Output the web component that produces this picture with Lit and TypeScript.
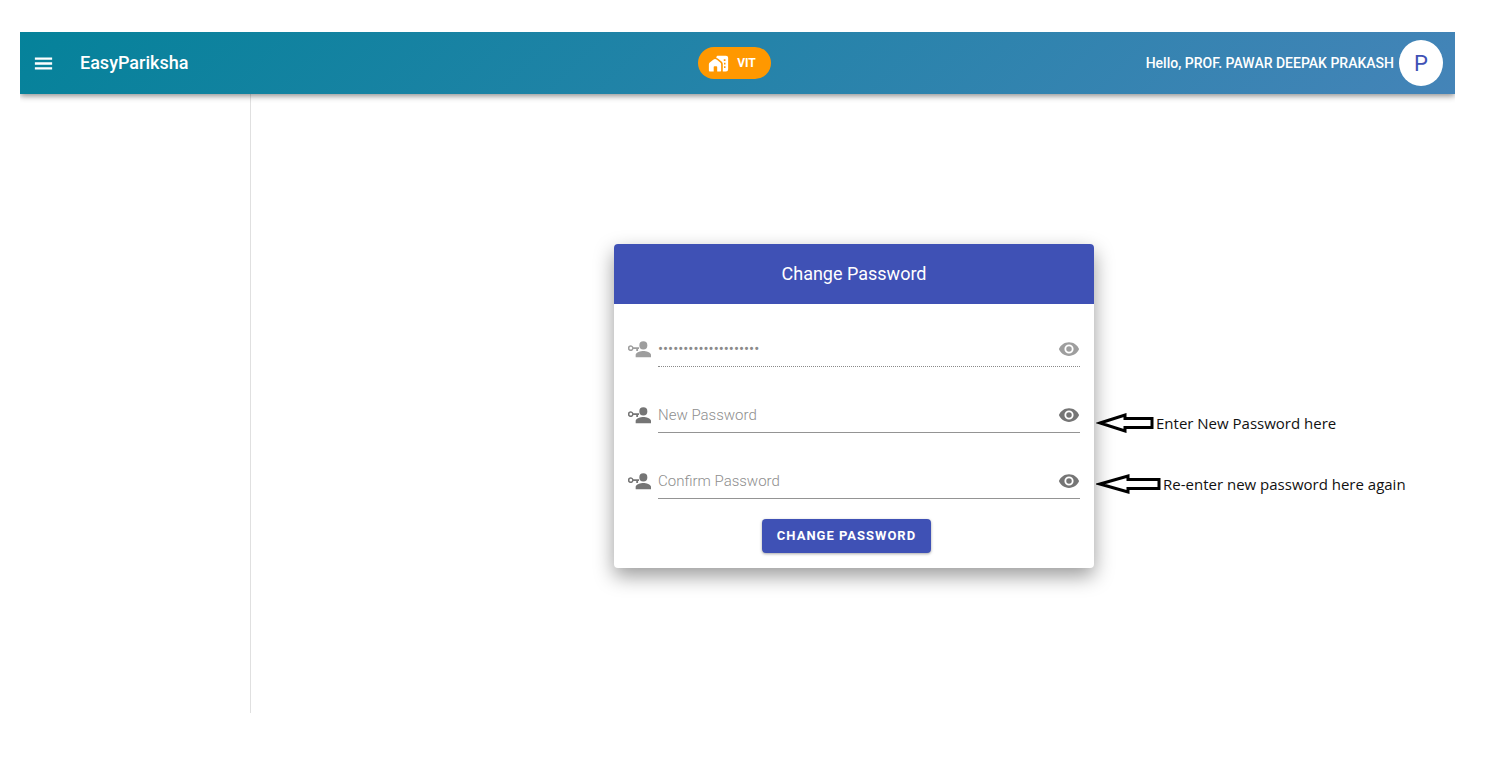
import { LitElement, html, css, svg, nothing } from "lit";
import { customElement, state } from "lit/decorators.js";
import { classMap } from "lit/directives/class-map.js";

interface PasswordField {
  id: string;
  label: string;
  value: string;
  disabled: boolean;
  note?: { text: string; kind: "short" | "long" };
}

const FIELDS: PasswordField[] = [
  { id: "current", label: "Current Password", value: "abcdefghijklmnopqrst", disabled: true },
  {
    id: "new",
    label: "New Password",
    value: "",
    disabled: false,
    note: { text: "Enter New Password here", kind: "short" },
  },
  {
    id: "confirm",
    label: "Confirm Password",
    value: "",
    disabled: false,
    note: { text: "Re-enter new password here again", kind: "long" },
  },
];

const keyIcon = svg`<path d="M11.500 9.700v1.800h-1v2H8.600v-2H5.700A3 3 0 1 1 5.700 9.700zM2.900 9.200a1.400 1.400 0 1 0 0 2.800 1.400 1.400 0 0 0 0-2.800M16 13.500c2.670 0 8 1.340 8 4V20H8v-2.500c0-2.660 5.330-4 8-4M16 3.500a4.200 4.200 0 1 1 0 8.400 4.200 4.200 0 0 1 0-8.400"/>`;
const eyeIcon = svg`<path d="M12 4.500C7 4.500 2.730 7.610 1 12c1.730 4.390 6 7.500 11 7.500s9.270-3.110 11-7.500c-1.730-4.390-6-7.500-11-7.500M12 17a5 5 0 1 1 0-10 5 5 0 0 1 0 10m0-8a3 3 0 1 0 0 6 3 3 0 0 0 0-6"/>`;
const menuIcon = svg`<path d="M3 18.200h18v-2.400H3zm0-5h18v-2.400H3zm0-7.400v2.400h18V5.800z"/>`;
const homeIcon = svg`<path d="M2 21a1 1 0 0 1-1-1v-7c0-.9.4-1.600 1-2.100L6 7.800a3.300 3.300 0 0 1 4.200 0l3.800 3.100c.6.500 1 1.200 1 2.100v7a1 1 0 0 1-1 1h-3.500v-5a1 1 0 0 0-1-1h-2a1 1 0 0 0-1 1v5z"/><path fill-rule="evenodd" d="M20.500 3H11.500c-1 0-1.600.5-1.900 1.500v1.300c.7.1 1.400.4 2 .9l3.800 3.100c1 .8 1.500 1.900 1.500 3.200V21h3.600a2.500 2.500 0 0 0 2.500-2.500v-13A2.500 2.500 0 0 0 20.500 3M20 17h-1.700v-2H20zm0-4h-1.700v-2H20zm0-4h-2V7h2z"/>`;

@customElement("app-root")
export class AppRoot extends LitElement {
  @state() private revealed: Record<string, boolean> = {};

  static styles = css`
    :host {
      display: flex;
      flex-direction: column;
      box-sizing: border-box;
      min-height: 100vh;
      padding: 32px 39px 46px 20px;
      background: #fff;
      font-family: Roboto, "Liberation Sans", sans-serif;
      color: #000;
    }
    .frame {
      flex: 1;
      display: flex;
      flex-direction: column;
      overflow: clip;
    }
    .bar {
      position: relative;
      display: grid;
      grid-template-columns: 1fr auto 1fr;
      align-items: center;
      height: 62px;
      padding: 0 12px 0 6px;
      background: linear-gradient(135deg, #05829a, #4484b8);
      box-shadow: 0 2px 6px rgba(0, 0, 0, 0.45);
      color: #fff;
    }
    .brand {
      display: flex;
      align-items: center;
      gap: 20px;
    }
    .name {
      margin: 0;
      font-size: 18px;
      font-weight: 500;
      line-height: 24px;
    }
    button {
      display: flex;
      align-items: center;
      justify-content: center;
      border: 0;
      padding: 0;
      background: none;
      color: inherit;
      font: inherit;
      cursor: pointer;
    }
    svg {
      display: block;
      fill: currentColor;
    }
    .menu {
      width: 34px;
      height: 34px;
    }
    .pill {
      gap: 8px;
      height: 32px;
      padding: 0 15px 0 10px;
      border-radius: 16px;
      background: #ff9800;
      font-size: 12px;
      font-weight: 700;
    }
    .user {
      display: flex;
      align-items: center;
      justify-content: flex-end;
      gap: 5px;
      font-size: 14px;
      font-weight: 500;
      white-space: nowrap;
    }
    .avatar {
      width: 44px;
      height: 46px;
      border-radius: 50%;
      background: #fff;
      color: #3f51b5;
      font-size: 22px;
      font-weight: 400;
    }
    .body {
      flex: 1;
      display: flex;
    }
    .side {
      width: 230px;
      border-right: 1px solid #e0e0e0;
    }
    .main {
      flex: 1;
      display: flex;
      align-items: center;
      justify-content: center;
      padding: 4px 0 0 2px;
    }
    .card {
      width: 480px;
      border-radius: 4px;
      background: #fff;
      box-shadow: 0 8px 20px rgba(0, 0, 0, 0.4);
    }
    .title {
      margin: 0;
      border-radius: 4px 4px 0 0;
      background: #3f51b5;
      color: #fff;
      font-size: 18px;
      font-weight: 400;
      line-height: 60px;
      text-align: center;
    }
    .form {
      display: flex;
      flex-direction: column;
      gap: 32px;
      padding: 29px 14px 15px;
    }
    .field {
      position: relative;
      display: flex;
      align-items: center;
      gap: 7px;
      height: 34px;
      color: #757575;
    }
    .box {
      flex: 1;
      display: flex;
      align-items: center;
      box-sizing: border-box;
      height: 34px;
      border-bottom: 1px solid #949494;
    }
    .off {
      color: #9e9e9e;
    }
    .off .box {
      border-bottom: 1px dotted #8a8a8a;
    }
    input {
      flex: 1;
      min-width: 0;
      border: 0;
      padding: 0;
      outline: 0;
      background: none;
      color: #333;
      font: inherit;
      font-size: 15px;
      line-height: 20px;
    }
    input:disabled {
      color: #8a8a8a;
    }
    input::placeholder {
      color: #8e8e8e;
      font-weight: 300;
      opacity: 1;
    }
    .eye {
      width: 22px;
      height: 22px;
    }
    .submit {
      align-self: center;
      height: 34px;
      margin: -12px 15px 0 0;
      padding: 0 15px;
      border-radius: 4px;
      background: #3f51b5;
      box-shadow: 0 1px 3px rgba(0, 0, 0, 0.35);
      color: #fff;
      font-size: 13px;
      font-weight: 700;
      letter-spacing: 1px;
    }
    .note {
      position: absolute;
      left: calc(100% + 16px);
      display: flex;
      gap: 2px;
      color: #111;
      font-family: "Open Sans", "Noto Sans", sans-serif;
      font-size: 15px;
      line-height: 20px;
      white-space: nowrap;
    }
    .note svg {
      fill: none;
      stroke: #000;
      stroke-width: 3;
      stroke-linejoin: miter;
    }
    .short {
      top: 14px;
    }
    .long {
      top: 9px;
    }
  `;

  private toggle(id: string) {
    this.revealed = { ...this.revealed, [id]: !this.revealed[id] };
  }

  private renderNote(note: NonNullable<PasswordField["note"]>) {
    const end = note.kind === "short" ? 56 : 63;
    const neck = note.kind === "short" ? 29 : 32;
    return html`<span class="note ${note.kind}">
      <svg width=${end + 2} height="20" aria-hidden="true">
        <path d="M4 10 L${neck} 2 V5.500 H${end} V14.500 H${neck} V18 Z" />
      </svg>
      <span>${note.text}</span>
    </span>`;
  }

  private renderField(f: PasswordField) {
    return html`<div class=${classMap({ field: true, off: f.disabled })}>
      <label for=${f.id} aria-label=${f.label}>
        <svg width="23" height="23" viewBox="0 0 24 24">${keyIcon}</svg>
      </label>
      <div class="box">
        <input
          id=${f.id}
          type=${this.revealed[f.id] ? "text" : "password"}
          placeholder=${f.label}
          .value=${f.value}
          ?disabled=${f.disabled}
        />
        <button class="eye" type="button" aria-label="Show password" ?disabled=${f.disabled} @click=${() => this.toggle(f.id)}>
          <svg width="22" height="22" viewBox="0 0 24 24">${eyeIcon}</svg>
        </button>
      </div>
      ${f.note ? this.renderNote(f.note) : nothing}
    </div>`;
  }

  render() {
    return html`<div class="frame">
      <header class="bar">
        <div class="brand">
          <button class="menu" aria-label="Menu">
            <svg width="23" height="23" viewBox="0 0 24 24">${menuIcon}</svg>
          </button>
          <h1 class="name">EasyPariksha</h1>
        </div>
        <button class="pill">
          <svg width="21" height="21" viewBox="0 0 24 24">${homeIcon}</svg>
          VIT
        </button>
        <div class="user">
          <span>Hello, PROF. PAWAR DEEPAK PRAKASH</span>
          <button class="avatar" aria-label="Account">P</button>
        </div>
      </header>
      <div class="body">
        <nav class="side" aria-label="Main"></nav>
        <main class="main">
          <section class="card">
            <h2 class="title">Change Password</h2>
            <form class="form" @submit=${(e: Event) => e.preventDefault()}>
              ${FIELDS.map((f) => this.renderField(f))}
              <button class="submit" type="submit">CHANGE PASSWORD</button>
            </form>
          </section>
        </main>
      </div>
    </div>`;
  }
}
